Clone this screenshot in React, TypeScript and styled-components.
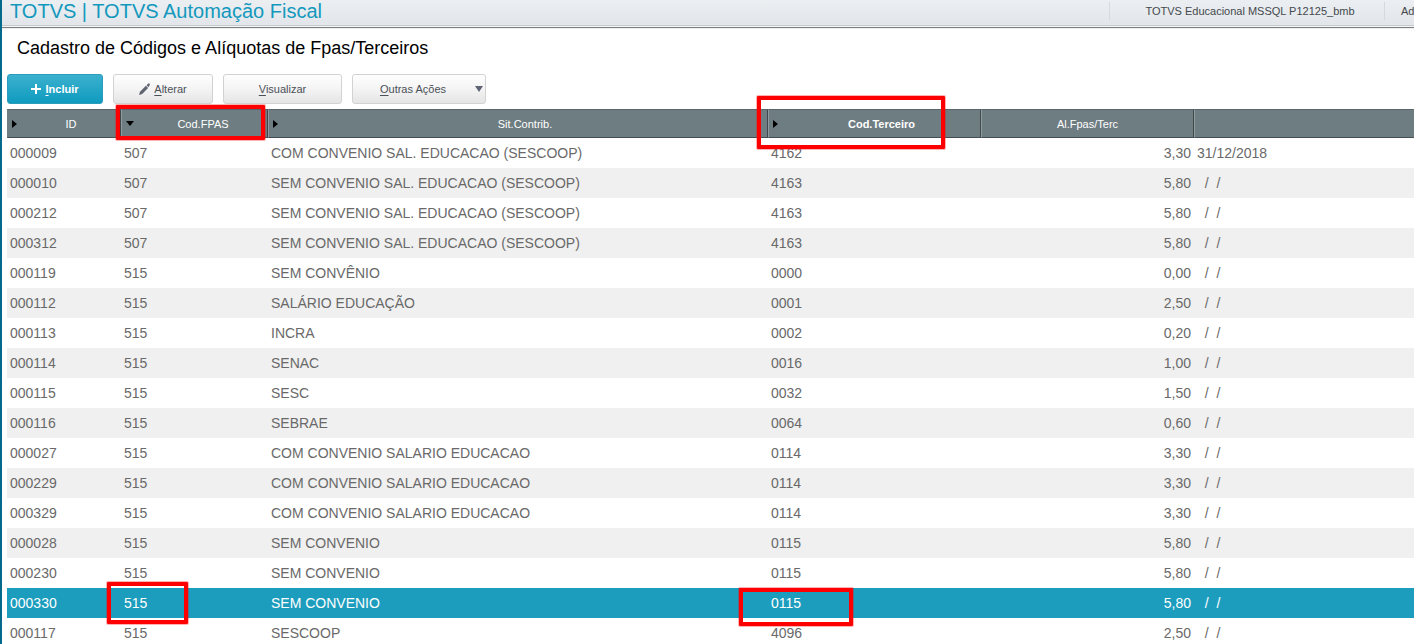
import React from "react";
import styled, { createGlobalStyle, css } from "styled-components";

const GlobalStyle = createGlobalStyle`
  * { box-sizing: border-box; }
  body {
    margin: 0;
    background: #ffffff;
    font-family: "Liberation Sans", Arial, sans-serif;
  }
`;

const Page = styled.div`
  height: 100vh;
  overflow: hidden;
  border-left: 2px solid #036a8c;
`;

const TopBar = styled.header`
  display: flex;
  justify-content: space-between;
  height: 29px;
  padding-left: 8px;
  background: linear-gradient(#ebeff2, #e2e6ea 25px, #c5cccd 25px, #c5cccd 26px, #f4f6f6 26px, #f4f6f6 27px, #7b7f80 27px, #7b7f80 28px, #f0f0f0 28px);
`;

const Product = styled.div`
  font-size: 20px;
  line-height: 22px;
  color: #1398bd;
  white-space: nowrap;
`;

const Session = styled.div`
  display: flex;
  height: 20px;
  padding-top: 2px;
  font-size: 11px;
  line-height: 18px;
  color: #44484c;
  white-space: nowrap;
`;

const SessionItem = styled.span<{ $width: number }>`
  width: ${(p) => p.$width}px;
  padding-left: 16px;
  padding-right: ${(p) => (p.$width > 30 ? 10 : 0)}px;
  border-left: 1px solid #d3d9dc;
  text-align: center;
  overflow: hidden;
`;

const Content = styled.main`
  padding-left: 5px;
`;

const Heading = styled.h1`
  margin: 0;
  padding: 8px 10px 14px;
  font-size: 18px;
  line-height: 23px;
  font-weight: 400;
  color: #000000;
`;

const Toolbar = styled.div`
  display: flex;
  gap: 10px;
  margin-bottom: 5px;
`;

const ToolButton = styled.button<{ $width: number; $primary?: boolean }>`
  display: flex;
  align-items: center;
  justify-content: center;
  gap: 4px;
  width: ${(p) => p.$width}px;
  height: 30px;
  padding: 0 10px;
  border: 1px solid #d2d2d2;
  border-radius: 3px;
  background: linear-gradient(#fefefe, #f4f4f4 50%, #e5e5e5);
  font-family: inherit;
  font-size: 11px;
  color: #4b5058;
  ${(p) =>
    p.$primary &&
    css`
      border-color: #2a9dbc;
      background: linear-gradient(#3cb0ce, #0f9bbf);
      color: #ffffff;
      font-weight: 700;
    `}
`;

const MenuButton = styled(ToolButton)`
  padding: 0 2px;
`;

const MenuText = styled.span`
  flex: 1;
`;

const Key = styled.span`
  text-decoration: underline;
  text-underline-offset: 2px;
`;

const GridArea = styled.div`
  position: relative;
`;

const Grid = styled.table`
  width: 100%;
  table-layout: fixed;
  border-collapse: separate;
  border-spacing: 0;
`;

const HeadCell = styled.th<{ $strong?: boolean }>`
  height: 29px;
  padding: 0 4px;
  border-top: 1px solid #59656a;
  border-bottom: 1px solid #444e52;
  border-right: 1px solid #40484c;
  border-left: 1px solid #8f9b9f;
  background: #6e7d82;
  font-size: 11px;
  font-weight: ${(p) => (p.$strong ? 700 : 400)};
  color: #ffffff;
  &:first-child { border-left-color: #6e7d82; }
  &:last-child { border-right-color: #6e7d82; }
`;

const HeadInner = styled.div`
  display: flex;
  align-items: center;
  gap: 9px;
`;

const HeadLabel = styled.span`
  flex: 1;
  text-align: center;
`;

const Row = styled.tr<{ $selected?: boolean }>`
  color: #696969;
  &:nth-child(even) { background: #f0f0f0; }
  ${(p) =>
    p.$selected &&
    css`
      &&& {
        background: #1d9dbe;
        color: #ffffff;
      }
    `}
`;

const Cell = styled.td<{ $right?: boolean }>`
  height: 30px;
  padding: 0 3px;
  font-size: 14px;
  line-height: 30px;
  text-align: ${(p) => (p.$right ? "right" : "left")};
  white-space: pre;
`;

const Mark = styled.div<{ $x: number; $y: number; $w: number; $h: number }>`
  position: absolute;
  left: ${(p) => p.$x}px;
  top: ${(p) => p.$y}px;
  width: ${(p) => p.$w}px;
  height: ${(p) => p.$h}px;
  border: 4px solid #ff0000;
  border-radius: 1px;
  box-shadow: 0 0 0 1px rgba(255, 0, 0, 0.3);
  pointer-events: none;
`;

const PlusIcon = () => (
  <svg width="10" height="10" viewBox="0 0 10 10" aria-hidden="true">
    <path d="M5 0v10M0 5h10" stroke="#ffffff" strokeWidth="2" />
  </svg>
);

const PencilIcon = () => (
  <svg width="11" height="12" viewBox="0 0 11 12" aria-hidden="true">
    <path d="M0 12l1-3.2 5.9-6 2.2 2.2-5.9 6zM7.5 2.2L9.3.4q.5-.5 1 0l.4.5q.4.5 0 1L9.6 4.3z" fill="#5f6470" />
  </svg>
);

const DownIcon = ({ color }: { color: string }) => (
  <svg width="8" height="6" viewBox="0 0 8 6" aria-hidden="true">
    <path d="M0 0h8L4 6z" fill={color} />
  </svg>
);

const SortDown = () => (
  <svg width="8" height="5" viewBox="0 0 8 5" aria-hidden="true">
    <path d="M0 0h8L4 5z" fill="#000000" />
  </svg>
);

const SortRight = () => (
  <svg width="5" height="8" viewBox="0 0 5 8" aria-hidden="true">
    <path d="M0 0l5 4-5 4z" fill="#000000" />
  </svg>
);

const columns = [
  { label: "ID", width: 114, icon: <SortRight /> },
  { label: "Cod.FPAS", width: 147, icon: <SortDown /> },
  { label: "Sit.Contrib.", width: 500, icon: <SortRight /> },
  { label: "Cod.Terceiro", width: 213, icon: <SortRight />, strong: true },
  { label: "Al.Fpas/Terc", width: 213 },
  { label: "" },
];

const blankDate = "  /  /";

const rows = [
  ["000009", "507", "COM CONVENIO SAL. EDUCACAO (SESCOOP)", "4162", "3,30", "31/12/2018"],
  ["000010", "507", "SEM CONVENIO SAL. EDUCACAO (SESCOOP)", "4163", "5,80", blankDate],
  ["000212", "507", "SEM CONVENIO SAL. EDUCACAO (SESCOOP)", "4163", "5,80", blankDate],
  ["000312", "507", "SEM CONVENIO SAL. EDUCACAO (SESCOOP)", "4163", "5,80", blankDate],
  ["000119", "515", "SEM CONVÊNIO", "0000", "0,00", blankDate],
  ["000112", "515", "SALÁRIO EDUCAÇÃO", "0001", "2,50", blankDate],
  ["000113", "515", "INCRA", "0002", "0,20", blankDate],
  ["000114", "515", "SENAC", "0016", "1,00", blankDate],
  ["000115", "515", "SESC", "0032", "1,50", blankDate],
  ["000116", "515", "SEBRAE", "0064", "0,60", blankDate],
  ["000027", "515", "COM CONVENIO SALARIO EDUCACAO", "0114", "3,30", blankDate],
  ["000229", "515", "COM CONVENIO SALARIO EDUCACAO", "0114", "3,30", blankDate],
  ["000329", "515", "COM CONVENIO SALARIO EDUCACAO", "0114", "3,30", blankDate],
  ["000028", "515", "SEM CONVENIO", "0115", "5,80", blankDate],
  ["000230", "515", "SEM CONVENIO", "0115", "5,80", blankDate],
  ["000330", "515", "SEM CONVENIO", "0115", "5,80", blankDate],
  ["000117", "515", "SESCOOP", "4096", "2,50", blankDate],
];

const selectedId = "000330";

export default function App() {
  return (
    <Page>
      <GlobalStyle />
      <TopBar>
        <Product>TOTVS | TOTVS Automação Fiscal</Product>
        <Session>
          <SessionItem $width={275}>TOTVS Educacional MSSQL P12125_bmb</SessionItem>
          <SessionItem $width={30}>Ad</SessionItem>
        </Session>
      </TopBar>
      <Content>
        <Heading>Cadastro de Códigos e Alíquotas de Fpas/Terceiros</Heading>
        <Toolbar>
          <ToolButton type="button" $width={96} $primary>
            <PlusIcon />
            <span><Key>I</Key>ncluir</span>
          </ToolButton>
          <ToolButton type="button" $width={100}>
            <PencilIcon />
            <span><Key>A</Key>lterar</span>
          </ToolButton>
          <ToolButton type="button" $width={119}>
            <span><Key>V</Key>isualizar</span>
          </ToolButton>
          <MenuButton type="button" $width={134}>
            <MenuText><Key>O</Key>utras Ações</MenuText>
            <DownIcon color="#5f6474" />
          </MenuButton>
        </Toolbar>
        <GridArea>
          <Grid>
            <colgroup>
              {columns.map((c, i) => (
                <col key={i} width={c.width} />
              ))}
            </colgroup>
            <thead>
              <tr>
                {columns.map((c, i) => (
                  <HeadCell key={i} scope="col" $strong={c.strong}>
                    <HeadInner>
                      {c.icon}
                      <HeadLabel>{c.label}</HeadLabel>
                    </HeadInner>
                  </HeadCell>
                ))}
              </tr>
            </thead>
            <tbody>
              {rows.map((r) => (
                <Row key={r[0]} $selected={r[0] === selectedId}>
                  {r.map((value, i) => (
                    <Cell key={i} $right={i === 4}>{value}</Cell>
                  ))}
                </Row>
              ))}
            </tbody>
          </Grid>
          <Mark $x={109} $y={-4} $w={149} $h={35} />
          <Mark $x={750} $y={-13} $w={188} $h={53} />
          <Mark $x={100} $y={473} $w={81} $h={42} />
          <Mark $x={732} $y={479} $w={114} $h={38} />
        </GridArea>
      </Content>
    </Page>
  );
}
